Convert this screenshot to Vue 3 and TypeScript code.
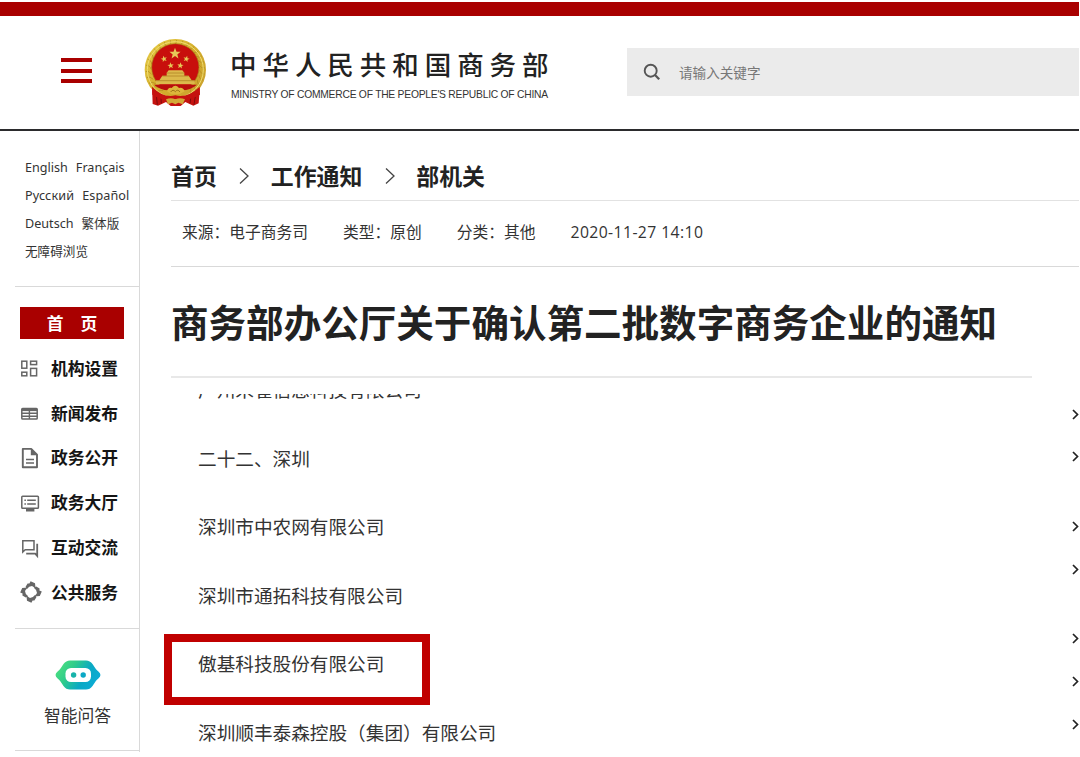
<script setup lang="ts">
interface MenuItem {
  icon: string
  label: string
}

const languages: string[][] = [
  ['English', 'Français'],
  ['Русский', 'Español'],
  ['Deutsch', '繁体版'],
  ['无障碍浏览'],
]

const menu: MenuItem[] = [
  { icon: 'grid', label: '机构设置' },
  { icon: 'news', label: '新闻发布' },
  { icon: 'doc', label: '政务公开' },
  { icon: 'screen', label: '政务大厅' },
  { icon: 'chat', label: '互动交流' },
  { icon: 'service', label: '公共服务' },
]

const crumbs: string[] = ['首页', '工作通知', '部机关']
const meta: string[] = ['来源：电子商务司', '类型：原创', '分类：其他']

const companies: { name: string; marked?: boolean }[] = [
  { name: '广州朱雀信息科技有限公司' },
  { name: '二十二、深圳' },
  { name: '深圳市中农网有限公司' },
  { name: '深圳市通拓科技有限公司' },
  { name: '傲基科技股份有限公司', marked: true },
  { name: '深圳顺丰泰森控股（集团）有限公司' },
]

const arrowGroups: number[] = [2, 2, 3]

const star = '0,-10 2.6,-3.2 9.5,-3.1 4,1.4 5.9,8.1 0,4.2 -5.9,8.1 -4,1.4 -9.5,-3.1 -2.6,-3.2'
const leaves: number[] = Array.from({ length: 25 }, (_, i) => -144 + i * 12)
</script>

<template>
  <div class="page">
    <div class="topbar"></div>
    <header class="header">
      <div class="burger"><i></i><i></i><i></i></div>
      <svg class="emblem" viewBox="0 0 270 255">
        <defs>
          <linearGradient id="gold" x1="0" y1="0" x2="1" y2="1">
            <stop offset="0" stop-color="#e8cf4a" />
            <stop offset="0.5" stop-color="#d4ae2c" />
            <stop offset="1" stop-color="#c9a030" />
          </linearGradient>
        </defs>
        <path d="M66 168 L68 222 L84 227 L108 216 L122 228 L152 228 L166 216 L190 227 L206 220 L210 168 Z" fill="#c4120f" />
        <path d="M78 186 L82 224 M92 192 L94 220 M184 190 L180 220 M198 186 L192 224" stroke="#7f0b0b" stroke-width="3" fill="none" />
        <circle cx="136" cy="119" r="92" fill="url(#gold)" />
        <g fill="none" stroke="#b08a1e" stroke-width="2">
          <path v-for="a in leaves" :key="a" d="M-7 -72 Q6 -78 4 -89" :transform="`translate(136 119) rotate(${a})`" />
        </g>
        <circle cx="136" cy="119" r="84" fill="none" stroke="#efdc70" stroke-width="3" />
        <circle cx="136" cy="112" r="71" fill="#c80f0c" stroke="#a6821b" stroke-width="2" />
        <g fill="#e6c957">
          <polygon :points="star" transform="translate(135 71) scale(1.75)" />
          <polygon :points="star" transform="translate(102 87) rotate(-15)" />
          <polygon :points="star" transform="translate(169 87) rotate(15)" />
          <polygon :points="star" transform="translate(122 107) rotate(-8)" />
          <polygon :points="star" transform="translate(151 107) rotate(8)" />
        </g>
        <path d="M110 128 L116 121 H157 L163 128 V137 H176 L185 151 H194 V163 H78 V151 H88 L97 137 H110 Z" fill="#dcb94b" />
        <path d="M110 129 H163 M97 138 H176 M78 152 H194" stroke="#a97a1d" stroke-width="2" />
        <path d="M72 164 H201 Q180 181 157 181 L145 172 H127 L116 181 Q90 180 72 164 Z" fill="#b80e0d" />
        <path d="M111 184 Q114 171 125 174 Q136 160 147 174 Q160 171 164 184 Q151 194 136 193 Q121 194 111 184 Z" fill="#dcb63b" />
        <path d="M122 186 Q129 176 136 185 Q143 176 150 186" fill="none" stroke="#9c7218" stroke-width="3" />
        <path d="M66 170 Q100 205 136 196 Q173 205 209 170 L210 194 Q174 215 136 207 Q98 215 67 194 Z" fill="#c5120f" />
        <path d="M108 208 Q123 201 136 208 Q150 201 165 208 L158 223 L145 218 L136 223 L126 218 L114 223 Z" fill="#d3a937" />
      </svg>
      <div class="brand">
        <div class="brand-cn">中华人民共和国商务部</div>
        <div class="brand-en">MINISTRY OF COMMERCE OF THE PEOPLE'S REPUBLIC OF CHINA</div>
      </div>
      <div class="search">
        <svg class="search-icon" viewBox="0 0 18 18" fill="none" stroke="#555" stroke-width="1.9">
          <circle cx="7.7" cy="7.7" r="6" />
          <path d="M12 12 L16.2 16.2" stroke-width="2.3" />
        </svg>
        <span>请输入关键字</span>
      </div>
    </header>

    <div class="body">
      <aside class="side">
        <div class="langs">
          <div v-for="(row, i) in languages" :key="i" class="lang-row">
            <span v-for="l in row" :key="l">{{ l }}</span>
          </div>
        </div>
        <nav class="nav">
          <div class="home">首<span></span>页</div>
          <div v-for="m in menu" :key="m.icon" class="item">
            <svg class="icon" viewBox="0 0 22 22" fill="none" stroke="#666" stroke-width="1.5">
              <g v-if="m.icon === 'grid'">
                <rect x="1.8" y="4.2" width="5" height="7" />
                <rect x="10.6" y="4.2" width="6" height="3.4" />
                <rect x="1.8" y="15.2" width="5" height="3.6" />
                <rect x="10.6" y="11.4" width="6" height="7.4" />
              </g>
              <g v-else-if="m.icon === 'news'">
                <rect x="1.8" y="6.4" width="15.4" height="10.6" rx="0.8" />
                <path d="M1.8 7.9 H17.2" stroke-width="2.4" />
                <path d="M1.8 11.2 H17.2 M1.8 14.2 H17.2 M9.4 8 V17" stroke-width="1.4" />
              </g>
              <g v-else-if="m.icon === 'doc'">
                <path d="M2.8 1.9 H11.2 L17 7.7 V20.3 H2.8 Z" stroke-width="1.9" stroke-linejoin="round" />
                <path d="M10.8 2 V8.2 H17 Z" fill="#666" stroke="none" />
                <path d="M6 12.5 H14 M6 16 H14" stroke-width="1.7" />
              </g>
              <g v-else-if="m.icon === 'screen'">
                <rect x="1.8" y="4.2" width="16.6" height="12" rx="0.8" />
                <path d="M6 18.1 H14.4" stroke-width="2.8" />
                <path d="M4.4 8.2 H5.9 M7.2 8.2 H15.8 M4.4 12 H5.9 M7.2 12 H15.8" stroke-width="1.6" />
              </g>
              <g v-else-if="m.icon === 'chat'">
                <path d="M2.8 3.8 H14 V12.8 H5.2 L2.8 15 Z" />
                <path d="M17.2 6.8 V18.8 L15.2 16.6 H6.2" stroke-width="1.8" />
              </g>
              <g v-else fill="#666" stroke="none">
                <path
                  v-for="a in [0, 90, 180, 270]"
                  :key="a"
                  d="M5.6 5.8 L7.6 2.4 L9.4 2.6 L10.6 0.2 L15 2.2 L15.6 7.4 L13.6 6 L12 5 Q9 5 6.8 8.2 Z"
                  :transform="`rotate(${a} 11 11)`"
                />
              </g>
            </svg>
            <span>{{ m.label }}</span>
          </div>
        </nav>
        <div class="bot">
          <svg class="bot-icon" viewBox="0 0 46 30">
            <defs>
              <linearGradient id="botfill" x1="0" y1="0.2" x2="1" y2="0.6">
                <stop offset="0.05" stop-color="#4ade80" />
                <stop offset="0.35" stop-color="#2ecb8c" />
                <stop offset="0.68" stop-color="#0aa9c4" />
                <stop offset="1" stop-color="#0cabd6" />
              </linearGradient>
            </defs>
            <path
              d="M15 0.5 H31 Q35 0.5 37.5 4 L40.5 8.5 Q41.5 10 43.4 11.5 Q47.5 15 43.4 18.5 Q41.5 20 40.5 21.5 L37.5 26 Q35 29.5 31 29.5 H15 Q11 29.5 8.5 26 L5.5 21.5 Q4.5 20 2.6 18.5 Q-1.5 15 2.6 11.5 Q4.5 10 5.5 8.5 L8.5 4 Q11 0.5 15 0.5 Z"
              fill="url(#botfill)"
            />
            <rect x="10.5" y="8" width="25.5" height="14" rx="5.5" fill="#fff" />
            <circle cx="18.6" cy="15" r="2.7" fill="#17b3aa" />
            <circle cx="28.2" cy="15" r="2.7" fill="#0ba8c6" />
          </svg>
          <span>智能问答</span>
        </div>
      </aside>

      <main class="main">
        <div class="crumbs">
          <template v-for="(c, i) in crumbs" :key="c">
            <svg v-if="i > 0" class="sep" viewBox="0 0 10 18" fill="none" stroke="#444" stroke-width="1.3">
              <path d="M1 1.5 L9 9 L1 16.5" />
            </svg>
            <span>{{ c }}</span>
          </template>
        </div>
        <div class="meta">
          <span v-for="t in meta" :key="t">{{ t }}</span>
          <span class="date">2020-11-27 14:10</span>
        </div>
        <h1 class="title">商务部办公厅关于确认第二批数字商务企业的通知</h1>
        <div class="content">
          <div class="list">
            <div v-for="c in companies" :key="c.name" class="company">
              {{ c.name }}
              <i v-if="c.marked" class="mark"></i>
            </div>
          </div>
          <div class="arrows">
            <div v-for="(n, g) in arrowGroups" :key="g" class="arrow-group">
              <svg v-for="k in n" :key="k" class="arrow" viewBox="0 0 7 11" fill="none" stroke="#222" stroke-width="1.7">
                <path d="M1 1 L5.5 5.5 L1 10" />
              </svg>
            </div>
          </div>
        </div>
      </main>
    </div>
  </div>
</template>

<style>
body {
  margin: 0;
  background: #fff;
}
</style>

<style scoped>
.page {
  width: 1079px;
  height: 757px;
  overflow: hidden;
  box-sizing: border-box;
  padding-top: 2px;
  background: #fff;
  color: #333;
  font-family: 'Noto Sans', 'Noto Sans CJK SC', sans-serif;
}
.topbar {
  height: 14px;
  background: #a90000;
}
.header {
  height: 113px;
  display: flex;
  border-bottom: 2px solid #2b2b2d;
}
.burger {
  width: 31px;
  margin: 42px 0 0 61px;
  display: flex;
  flex-direction: column;
  gap: 6.5px;
}
.burger i {
  height: 4px;
  background: #a90000;
}
.emblem {
  width: 90px;
  height: 85px;
  margin: 14px 0 0 38px;
}
.brand {
  width: 396px;
  margin: 28px 0 0 10px;
  white-space: nowrap;
}
.brand-cn {
  color: #222;
  font: 500 26.5px/40px 'Noto Sans CJK SC', sans-serif;
  letter-spacing: 5.95px;
}
.brand-en {
  margin-top: 4px;
  padding-left: 1px;
  font: 10.3px/14px 'Liberation Sans', sans-serif;
  letter-spacing: -0.24px;
}
.search {
  flex: 1;
  height: 48px;
  margin-top: 32px;
  margin-left: 1px;
  display: flex;
  align-items: center;
  background: #ebebeb;
  color: #777;
  font: 13.6px/20px 'Noto Sans CJK SC', sans-serif;
}
.search-icon {
  width: 18px;
  height: 18px;
  margin: 0 18px 0 16px;
}
.body {
  display: flex;
}
.side {
  width: 124px;
  height: 621px;
  margin-left: 15px;
  border-right: 1px solid #d9d9d9;
}
.langs {
  height: 132px;
  padding: 23px 0 0 10px;
  border-bottom: 1px solid #d9d9d9;
  font-size: 12.6px;
  line-height: 28px;
}
.lang-row {
  height: 28px;
  display: flex;
  gap: 8px;
  white-space: nowrap;
}
.lang-row:nth-child(2) {
  letter-spacing: 0.12px;
}
.nav {
  height: 321px;
  padding: 20px 0 0 5px;
  border-bottom: 1px solid #d9d9d9;
}
.home {
  width: 104px;
  height: 32px;
  display: flex;
  justify-content: center;
  gap: 8.5px;
  background: #a90000;
  color: #fff;
  font: 700 16.8px/32px 'Noto Sans CJK SC', sans-serif;
  margin-bottom: 6.5px;
}
.item {
  height: 44.8px;
  display: flex;
  align-items: center;
  color: #151515;
  font: 700 16.8px/24px 'Noto Sans CJK SC', sans-serif;
}
.icon {
  width: 22px;
  height: 22px;
  margin: 1px 9.5px 0 -0.5px;
}
.bot {
  height: 121px;
  display: flex;
  flex-direction: column;
  align-items: center;
  padding-left: 1px;
  border-bottom: 1px solid #d9d9d9;
  font: 16.8px/24px 'Noto Sans CJK SC', sans-serif;
}
.bot-icon {
  width: 46px;
  height: 30px;
  margin: 31px 0 13px;
}
.main {
  flex: 1;
  margin-left: 31px;
}
.crumbs {
  height: 51px;
  padding-top: 18px;
  display: flex;
  align-items: center;
  border-bottom: 1px solid #e2e2e2;
  color: #222;
  font: 700 22.9px/34px 'Noto Sans CJK SC', sans-serif;
}
.sep {
  width: 10px;
  height: 18px;
  margin: 2px 21.5px 0 22.5px;
}
.meta {
  height: 61px;
  padding: 0 0 4px 11px;
  display: flex;
  align-items: center;
  gap: 35px;
  border-bottom: 1px solid #d9d9d9;
  font: 15.75px/24px 'Noto Sans CJK SC', sans-serif;
}
.date {
  font-family: 'Open Sans', 'Noto Sans', sans-serif;
  letter-spacing: 0.4px;
}
.title {
  width: 861px;
  height: 111px;
  margin: 0;
  box-sizing: border-box;
  padding-top: 27px;
  border-bottom: 2px solid #e8e8e8;
  color: #222;
  font: 700 37.55px/54px 'Noto Sans CJK SC', sans-serif;
  white-space: nowrap;
}
.content {
  display: flex;
  justify-content: space-between;
}
.list {
  height: 363px;
  margin: 16px 0 0 -7px;
  padding-left: 34px;
  overflow: hidden;
}
.company {
  position: relative;
  height: 68.5px;
  font: 18.65px/28px 'Noto Sans CJK SC', sans-serif;
  white-space: nowrap;
}
.company:first-child {
  margin-top: -19px;
}
.mark {
  position: absolute;
  left: -34px;
  top: -15.5px;
  width: 250px;
  height: 55px;
  border: 8px solid #c00000;
}
.arrows {
  padding-top: 30.5px;
  display: flex;
  flex-direction: column;
  gap: 58.5px;
}
.arrow-group {
  display: flex;
  flex-direction: column;
  gap: 31.9px;
}
.arrow {
  width: 7px;
  height: 11px;
}
</style>
